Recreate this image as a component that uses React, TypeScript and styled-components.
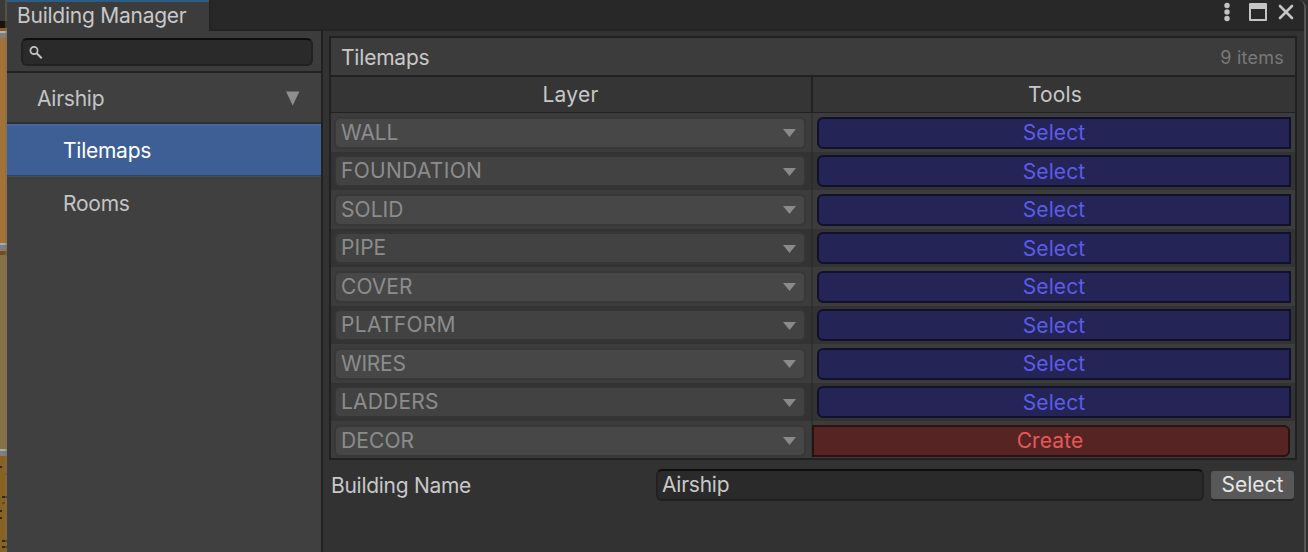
import React from 'react';
import styled, { createGlobalStyle } from 'styled-components';

const Global = createGlobalStyle`
  * { box-sizing: border-box; }
  body { margin: 0; background: #2f2f2f; overflow: hidden; }
  button, input { font: inherit; color: inherit; }
`;

const Screen = styled.div`
  display: flex;
  width: 1308px;
  height: 552px;
  background: #303030;
  color: #c8c8c8;
  font: 400 21px/26px Inter, sans-serif;
  white-space: nowrap;
`;

const Scene = styled.div`
  width: 7px;
  flex: none;
  svg { display: block; }
`;

const Window = styled.div`
  flex: none;
  width: 1299px;
  display: flex;
  flex-direction: column;
  background: #323232;
  border-right: 2px solid #555;
  border-top-right-radius: 8px;
  overflow: hidden;
`;

const TabBar = styled.div`
  height: 31px;
  flex: none;
  display: flex;
  justify-content: space-between;
  background: #282828;
  box-shadow: inset 0 -2px #232323;
`;

const Tab = styled.div`
  width: 204px;
  padding: 2px 0 0 10px;
  background: linear-gradient(#2c5d87 2px, #3c3c3c 2px);
  border-right: 2px solid #232323;
  line-height: 27px;
`;

const WindowIcons = styled.div`
  width: 84px;
  svg { display: block; }
`;

const Body = styled.div`
  flex: 1;
  display: flex;
  min-height: 0;
`;

const Sidebar = styled.div`
  width: 316px;
  flex: none;
  background: #404040;
  border-right: 2px solid #212121;
`;

const SearchBar = styled.div`
  height: 42px;
  padding: 7px 8px 0 14px;
  background: #3c3c3c;
  border-bottom: 2px solid #232323;
`;

const Field = styled.div<{ $w: number; $h: number }>`
  width: ${p => p.$w}px;
  height: ${p => p.$h}px;
  display: flex;
  align-items: center;
  background: #2a2a2a;
  border: 2px solid #212121;
  border-top-color: #0d0d0d;
  border-radius: 6px;
  padding-left: 4px;
`;

const TreeItem = styled.div<{ $h: number; $indent: number; $selected?: boolean; $line?: boolean }>`
  height: ${p => p.$h}px;
  padding: 0 21px 0 ${p => p.$indent}px;
  display: flex;
  align-items: center;
  justify-content: space-between;
  color: ${p => (p.$selected ? '#fff' : '#c4c4c4')};
  background: ${p => (p.$selected ? '#3e5f96' : '#404040')};
  ${p => p.$selected && 'box-shadow: inset 0 2px #4466a0, inset 0 -1px #2b4570; border-bottom: 1px solid #474b52;'}
  ${p => p.$line && 'border-bottom: 2px solid #303030;'}
`;

const Main = styled.div`
  flex: 1;
  padding: 5px 0 0 6px;
`;

const Table = styled.div`
  width: 968px;
  height: 424px;
  border: 2px solid #212121;
`;

const TitleRow = styled.div`
  height: 39px;
  padding: 0 11px 0 10px;
  display: flex;
  align-items: center;
  justify-content: space-between;
  background: #3c3c3c;
  border-bottom: 2px solid #212121;
`;

const Count = styled.span`
  color: #797979;
  padding-top: 2px;
  font-size: 18px;
  letter-spacing: 0.25px;
`;

const HeadRow = styled.div`
  height: 36px;
  display: flex;
  background: #353535;
  border-bottom: 1px solid #212121;
`;

const HeadCell = styled.div<{ $w: number; $sep?: boolean }>`
  width: ${p => p.$w}px;
  text-align: center;
  line-height: 35px;
  letter-spacing: ${p => (p.$sep ? 0.25 : 0.1)}px;
  ${p => (p.$sep ? 'border-right: 2px solid #212121; padding-right: 1px;' : 'padding-left: 2px;')}
`;

const Row = styled.div<{ $odd: boolean; $h: number }>`
  height: ${p => p.$h}px;
  display: flex;
  background: ${p => (p.$odd ? '#333' : '#3c3c3c')};
`;

const LayerCell = styled.div<{ $odd: boolean }>`
  width: 482px;
  padding: ${p => (p.$odd ? 3 : 4)}px 0 0 3px;
  border-right: 2px solid ${p => (p.$odd ? '#2d2d2d' : '#333')};
`;

const Dropdown = styled.div<{ $odd: boolean }>`
  width: 472px;
  height: 32px;
  padding: 0 8px 0 5px;
  display: flex;
  align-items: center;
  justify-content: space-between;
  border: 2px solid ${p => (p.$odd ? '#363636' : '#383838')};
  border-radius: 6px;
  background: ${p => (p.$odd ? '#424242' : '#474747')};
  color: #8c8c8c;
  svg { margin-top: ${p => (p.$odd ? 2 : 0)}px; }
`;

const ToolCell = styled.div<{ $odd: boolean; $create: boolean }>`
  padding: ${p => (p.$odd ? 3 : 4)}px 0 0 ${p => (p.$create ? 0 : 4)}px;
  margin-left: ${p => (p.$create ? -1 : 0)}px;
`;

const ToolButton = styled.button<{ $create: boolean; $odd: boolean }>`
  display: block;
  width: ${p => (p.$create ? 478 : 474)}px;
  height: 32px;
  padding: ${p => (p.$odd ? 1 : 0)}px ${p => (p.$create ? 2 : 0)}px 0 0;
  line-height: ${p => (p.$odd ? 27 : 28)}px;
  letter-spacing: 0.1px;
  color: ${p => (p.$create ? '#e65957' : '#5c5ce6')};
  background: ${p => (p.$create ? '#572424' : '#242457')};
  border: 2px solid ${p => (p.$create ? '#2b1111' : '#11112b')};
  border-radius: ${p => (p.$create ? '0 6px 6px 0' : '6px 0 0 6px')};
`;

const Footer = styled.div`
  display: flex;
  padding-top: 9px;
`;

const Label = styled.div`
  width: 327px;
  padding: 4px 0 0 2px;
  letter-spacing: -0.28px;
`;

const GreyButton = styled.button`
  margin: 2px 0 0 7px;
  width: 83px;
  height: 28px;
  padding: 0;
  border: 0;
  border-radius: 3px;
  background: #585858;
  box-shadow: 0 2px #242424;
  color: #e6e6e6;
  line-height: 28px;
`;

const Text = styled.span<{ $ls?: number; $y?: number }>`
  letter-spacing: ${p => p.$ls ?? -0.25}px;
  padding-top: ${p => p.$y ?? 0}px;
`;

const LAYERS = [
  { name: 'WALL', tracking: -0.1 },
  { name: 'FOUNDATION', tracking: 0.3 },
  { name: 'SOLID', tracking: 0.05 },
  { name: 'PIPE', tracking: 0.05 },
  { name: 'COVER', tracking: 0.05 },
  { name: 'PLATFORM', tracking: 0.3 },
  { name: 'WIRES', tracking: -0.25 },
  { name: 'LADDERS', tracking: 0.2 },
  { name: 'DECOR', tracking: 0.1 },
];

const SceneStrip = () => (
  <Scene>
    <svg width="7" height="552" shapeRendering="crispEdges">
      <rect width="7" height="21" fill="#3a3a3a" />
      <rect y="21" width="7" height="9" fill="#1d1305" />
      <rect y="28" width="7" height="3" fill="#8a5a24" />
      <rect y="31" width="7" height="2" fill="#b0b0b0" />
      <rect y="33" width="7" height="5" fill="#808080" />
      <rect y="38" width="7" height="205" fill="#a37238" />
      <rect y="243" width="7" height="2" fill="#aaa" />
      <rect y="245" width="7" height="6" fill="#7e7e80" />
      <rect y="251" width="7" height="4" fill="#774a1c" />
      <rect y="255" width="7" height="194" fill="#877045" />
      <rect y="449" width="7" height="2" fill="#aaa" />
      <rect y="451" width="7" height="5" fill="#7e7e80" />
      <rect y="456" width="7" height="96" fill="#876221" />
      <path d="M0 466h2v2h-2zM2 496h5v2h-5zM0 510h2v2h-2zM0 517h2v2h-2zM2 540h5v2h-5zM2 546h5v2h-5z" fill="#33270f" />
      <path d="M2 502h3v2h-3zM5 473h2v2h-2z" fill="#665022" />
      <rect x="5" y="0" width="2" height="552" fill="#77705a" opacity=".45" />
    </svg>
  </Scene>
);

export default function App() {
  return (
    <Screen>
      <Global />
      <SceneStrip />
      <Window>
        <TabBar>
          <Tab><Text>Building Manager</Text></Tab>
          <WindowIcons>
            <svg width="84" height="29" fill="#c4c4c4">
              <circle cx="7" cy="5.5" r="2.7" />
              <circle cx="7" cy="12" r="2.7" />
              <circle cx="7" cy="18.5" r="2.7" />
              <path fillRule="evenodd" d="M30 3h16a1 1 0 0 1 1 1v16a1 1 0 0 1-1 1h-16a1 1 0 0 1-1-1v-16a1 1 0 0 1 1-1zM31 9v10h14v-10z" />
              <path d="M60 6l12 12M72 6l-12 12" stroke="#c4c4c4" strokeWidth="2.6" strokeLinecap="round" />
            </svg>
          </WindowIcons>
        </TabBar>
        <Body>
          <Sidebar>
            <SearchBar>
              <Field $w={292} $h={28}>
                <svg width="18" height="18" fill="none" stroke="#c4c4c4" strokeWidth="1.7">
                  <circle cx="7" cy="7.5" r="3.6" />
                  <path d="M9.7 10.2l5 5" strokeWidth="2" />
                </svg>
              </Field>
            </SearchBar>
            <TreeItem $h={51} $indent={30} $line>
              <Text $y={2}>Airship</Text>
              <svg width="15" height="16"><path d="M1 1.5h13.4l-6.7 14z" fill="#8e8e8e" /></svg>
            </TreeItem>
            <TreeItem $h={53} $indent={56} $selected><Text $y={2}>Tilemaps</Text></TreeItem>
            <TreeItem $h={53} $indent={56}><Text $y={1}>Rooms</Text></TreeItem>
          </Sidebar>
          <Main>
            <Table>
              <TitleRow>
                <Text $y={2} $ls={-0.2}>Tilemaps</Text>
                <Count>9 items</Count>
              </TitleRow>
              <HeadRow>
                <HeadCell $w={482} $sep>Layer</HeadCell>
                <HeadCell $w={482}>Tools</HeadCell>
              </HeadRow>
              {LAYERS.map(({ name, tracking }, i) => {
                const odd = i % 2 === 1;
                const create = name === 'DECOR';
                return (
                  <Row key={name} $odd={odd} $h={create ? 37 : odd ? 38 : 39}>
                    <LayerCell $odd={odd}>
                      <Dropdown $odd={odd}>
                        <Text $ls={tracking}>{name}</Text>
                        <svg width="13" height="8"><path d="M0 0h13l-6.5 8z" fill="#8a8a8a" /></svg>
                      </Dropdown>
                    </LayerCell>
                    <ToolCell $odd={odd} $create={create}>
                      <ToolButton $create={create} $odd={odd}>{create ? 'Create' : 'Select'}</ToolButton>
                    </ToolCell>
                  </Row>
                );
              })}
            </Table>
            <Footer>
              <Label>Building Name</Label>
              <Field $w={548} $h={32}><Text>Airship</Text></Field>
              <GreyButton>Select</GreyButton>
            </Footer>
          </Main>
        </Body>
      </Window>
    </Screen>
  );
}
